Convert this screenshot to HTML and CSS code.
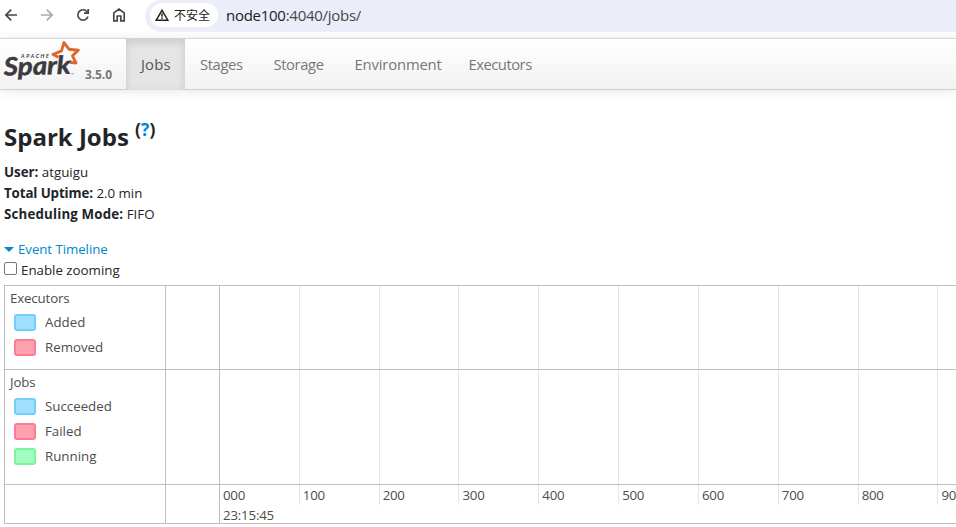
FILE: index.html
```html
<!DOCTYPE html>
<html lang="zh-CN">
<head>
<meta charset="utf-8">
<title>Spark Jobs</title>
<link rel="stylesheet" href="styles.css">
</head>
<body>
<header class="browser">
  <svg class="icons" width="130" height="30" viewBox="0 0 130 30" fill="none" stroke="#474747" stroke-width="1.7">
    <path d="M17 15H6M11.2 9.7L5.9 15L11.2 20.3"/>
    <path d="M41 15H52M46.8 9.7L52.1 15L46.8 20.3" stroke="#aaa"/>
    <path d="M87.1 11.7A5.2 5.2 0 1 0 88 16.5M88.2 9V13.2H84"/>
    <path d="M113.8 20.8V12.9L119 9L124.2 12.9V20.8H120.8V16H117.2V20.8Z"/>
  </svg>
  <div class="address">
    <div class="security">
      <svg width="14" height="12" viewBox="0 0 14 12" fill="none" stroke="#222" stroke-width="1.5"><path d="M7 1.3L12.8 11.2H1.2ZM7 4.5V7.7M7 8.6V10"/></svg>
      <span>不安全</span>
    </div>
    <span class="url">node100<span class="path">:4040/jobs/</span></span>
  </div>
</header>
<nav class="navbar">
  <div class="brand">
    <svg class="logo" width="80" height="42" viewBox="0 0 80 42">
      <path d="M58.5 18.2L53 15.5L61.5 11.8L64 3.6L69 10.2L78.3 11.2L72.5 16.8L76 24L69.5 23.4" fill="none" stroke="#dc692b" stroke-width="2.9" stroke-linejoin="round"/>
      <text class="apache" x="21" y="19.3" textLength="28">APACHE</text>
      <text class="spark" x="4" y="36.5" textLength="67" lengthAdjust="spacingAndGlyphs" transform="rotate(-1.5 4 37)">Spark</text>
      <text class="tm" x="71" y="37">™</text>
    </svg>
    <span class="version">3.5.0</span>
  </div>
  <div class="tabs">
    <a class="tab active">Jobs</a><a class="tab">Stages</a><a class="tab">Storage</a><a class="tab">Environment</a><a class="tab">Executors</a>
  </div>
</nav>
<main>
  <h3>Spark Jobs <sup>(<a>?</a>)</sup></h3>
  <ul class="summary">
    <li><b>User:</b> atguigu</li>
    <li><b class="uptime">Total Uptime:</b> 2.0 min</li>
    <li><b class="mode">Scheduling Mode:</b> FIFO</li>
  </ul>
  <div class="toggle"><i class="caret"></i><a>Event Timeline</a></div>
  <label class="zooming"><i class="check"></i><span>Enable zooming</span></label>
  <section class="timeline">
    <div class="cell">
      <div class="group">Executors</div>
      <div class="legend blue"><i></i>Added</div>
      <div class="legend red"><i></i>Removed</div>
    </div>
    <div class="cell"></div>
    <div class="cell ticks"><i></i><i></i><i></i><i></i><i></i><i></i><i></i><i></i><i></i><i></i></div>
    <div class="cell">
      <div class="group">Jobs</div>
      <div class="legend blue"><i></i>Succeeded</div>
      <div class="legend red"><i></i>Failed</div>
      <div class="legend green"><i></i>Running</div>
    </div>
    <div class="cell"></div>
    <div class="cell ticks"><i></i><i></i><i></i><i></i><i></i><i></i><i></i><i></i><i></i><i></i></div>
    <div class="cell"></div>
    <div class="cell"></div>
    <div class="cell axis">
      <div class="ticks labels"><i>000</i><i>100</i><i>200</i><i>300</i><i>400</i><i>500</i><i>600</i><i>700</i><i>800</i><i>900</i></div>
      <div class="time">23:15:45</div>
    </div>
  </section>
</main>
</body>
</html>
```
FILE: styles.css
```css
* { box-sizing: border-box; }
body { margin: 0; height: 527px; overflow: hidden; background: #fff; color: #212529; font: 13.3px/21px "Open Sans", "Noto Sans CJK SC", sans-serif; }
a { color: #0088cc; }
i { font-style: normal; }
.browser { height: 38px; display: flex; align-items: flex-start; }
.icons { flex: none; width: 130px; margin-right: 15px; }
.address { flex: 1; height: 32px; display: flex; align-items: center; background: #ebeef8; border-radius: 16px 0 0 16px; padding: 0 0 2px 5px; }
.security { width: 68px; height: 24px; border-radius: 12px; background: #fff; display: flex; align-items: center; padding-left: 5px; gap: 5px; color: #222; font: 12px/24px "Noto Sans CJK SC", sans-serif; white-space: nowrap; }
.url { margin-left: 8px; font-size: 15px; letter-spacing: -.27px; color: #202124; }
.path { color: #474747; }
.navbar { height: 52px; display: flex; border-top: 1px solid #d4d4d4; border-bottom: 1px solid #d0d0d0; background: linear-gradient(#fff, #f2f2f2); box-shadow: 0 1px 10px rgba(0,0,0,.1); }
.brand { width: 126px; display: flex; }
.logo { flex: none; width: 80px; overflow: visible; }
.version { margin: 25px 0 0 5px; font-weight: 700; font-size: 12px; color: #777; letter-spacing: -.1px; }
.apache { font: italic 700 5.4px Lato, sans-serif; fill: #3c3a3e; }
.spark { font: italic 700 25px Lato, sans-serif; fill: #3c3a3e; stroke: #3c3a3e; stroke-width: .5px; }
.tm { font: 4px "Open Sans", sans-serif; fill: #777; }
.tabs { display: grid; grid-template-columns: 59px 73.5px 81px 114px 94px; }
.tab { padding-left: 15px; color: #777; font-size: 14.8px; line-height: 51px; letter-spacing: -.4px; }
.tab:nth-child(4) { letter-spacing: -.15px; }
.tab:nth-child(5) { letter-spacing: -.5px; }
.tab.active { color: #555; letter-spacing: .15px; background: #e5e5e5; box-shadow: inset 0 3px 8px rgba(0,0,0,.125); }
main { padding: 30px 0 0 4px; }
h3 { margin: 0; height: 42px; font-size: 24px; line-height: 34px; letter-spacing: 0; white-space: nowrap; }
sup { font-size: 17.5px; line-height: 0; vertical-align: 10px; }
.summary { list-style: none; margin: 0 0 14px; padding: 0; }
.uptime { letter-spacing: -.1px; }
.mode { letter-spacing: .17px; }
.toggle { display: flex; align-items: center; height: 21px; letter-spacing: -.07px; }
.caret { border: 5px solid transparent; border-top-color: #0088cc; border-bottom: 0; margin-right: 4px; }
.zooming { display: flex; height: 25px; }
.check { width: 13px; height: 13px; border: 1px solid #767676; border-radius: 2px; margin: 2px 4px 0 0; }
.timeline { display: grid; grid-template-columns: 161px 54px 1fr; grid-template-rows: 84px 115px 39px; color: #4d4d4d; border-left: 1px solid #bfbfbf; border-bottom: 1px solid #bfbfbf; }
.cell { border-top: 1px solid #bfbfbf; min-width: 0; overflow: hidden; }
.cell:not(:nth-child(3n)) { border-right: 1px solid #bfbfbf; }
.group { height: 24px; padding-left: 5px; line-height: 25px; letter-spacing: -.15px; }
.legend { height: 25px; display: flex; align-items: center; padding-left: 9px; }
.legend i { width: 22px; height: 17px; border: 2px solid; border-radius: 3px; margin-right: 9px; }
.blue i { background: #a0dfff; border-color: #70cfff; }
.red i { background: #ffa1b0; border-color: #ff7b92; }
.green i { background: #a2fcc0; border-color: #7bf3a0; }
.ticks { display: grid; grid-template-columns: repeat(10, 79.83px); }
.ticks i { border-right: 1px solid #e5e5e5; }
.labels { height: 19px; }
.labels i { padding-left: 3px; line-height: 20px; letter-spacing: -.25px; }
.time { padding-left: 3px; line-height: 23px; height: 19px; letter-spacing: -.2px; }
```
